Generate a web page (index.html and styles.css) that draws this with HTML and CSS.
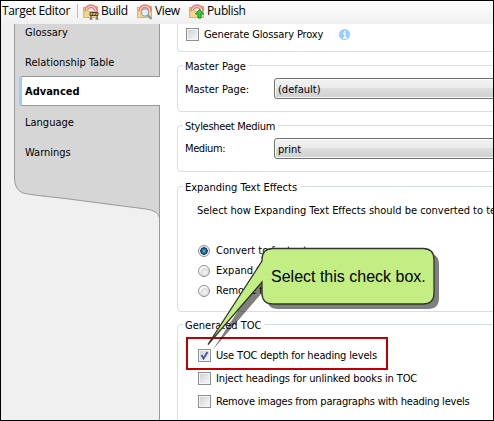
FILE: index.html
```html
<!DOCTYPE html>
<html lang="en">
<head>
<meta charset="utf-8">
<title>Target Editor</title>
<link rel="stylesheet" href="styles.css">
</head>
<body>
<svg class="defs" width="0" height="0" aria-hidden="true">
  <defs>
    <g id="folder">
      <path d="M.5 4.500h5l1-1h8v11H.5z" fill="#f6d783" stroke="#d5ad58"/>
      <path d="M2 8a6 6 0 0 1 12 0" fill="#fde3e0" stroke="#ef7775" stroke-width="1.500"/>
      <path d="M4.500 8a3.500 3.500 0 0 1 7 0" fill="#fff1ed" stroke="#ef7775" stroke-width="1.300"/>
      <path d="M.5 14.500v-6l4-1 2 1h8v6z" fill="#f3d58a" stroke="#ddb765"/>
    </g>
  </defs>
</svg>
<div class="window">
  <header class="toolbar">
    <span class="title">Target Editor</span>
    <span class="divider"></span>
    <span class="tool build"><svg width="16" height="17" viewBox="0 0 16 17"><use href="#folder"/><path d="M7 9.500h8v3H7z" fill="#edb52d" stroke="#454238"/><path d="m9 12 2-3m1 3 2-3M8 13v3m6-3v3M6.500 16h3m3 0h3" fill="none" stroke="#4e4e4e"/></svg><span>Build</span></span>
    <span class="tool view"><svg width="16" height="17" viewBox="0 0 16 17"><use href="#folder"/><circle cx="8" cy="9.500" r="3.600" fill="#e2edf5" stroke="#9aabb8" stroke-width="1.300"/><path d="m10.500 12 4 4" stroke="#8795a0" stroke-width="2"/></svg><span>View</span></span>
    <span class="tool publish"><svg width="16" height="17" viewBox="0 0 16 17"><use href="#folder"/><path d="m10.500 6.500 4 4.500h-2.500v4h-3v-4H6.500z" fill="#2bd044" stroke="#128c27"/></svg><span>Publish</span></span>
  </header>
  <div class="body">
    <nav class="sidebar">
      <svg class="backdrop" width="159" height="397" viewBox="0 0 159 397"><path d="M13.500 -2V155Q14 166 22 169Q30 171 60 174L145 185Q158 187 158.500 194V-2Z" fill="#d6d6d6"/><path d="M13.500 -2V155Q14 166 22 169Q30 171 60 174L145 185Q158 187 158.500 194M158.500 -2V397" fill="none" stroke="#999"/></svg>
      <div class="tab"><span>Glossary</span></div>
      <div class="tab"><span>Relationship Table</span></div>
      <div class="tab active"><span>Advanced</span></div>
      <div class="tab"><span>Language</span></div>
      <div class="tab"><span>Warnings</span></div>
    </nav>
    <main class="content">
      <section class="group proxy">
        <div class="row"><i class="check"></i><span class="t-proxy">Generate Glossary Proxy</span><svg class="info" width="11" height="11" viewBox="0 0 11 11"><circle cx="5.500" cy="5.500" r="5.500" fill="#99ccff"/><path d="M4 4.500h2V9M4 9h4M5 2.500h1.500" fill="none" stroke="#fff" stroke-width="1.300"/></svg></div>
      </section>
      <section class="group master">
        <h2>Master Page</h2>
        <div class="field"><label>Master Page:</label><div class="combo"><span>(default)</span></div></div>
      </section>
      <section class="group medium">
        <h2><span class="t-style">Stylesheet Medium</span></h2>
        <div class="field"><label><span class="t-medium">Medium:</span></label><div class="combo"><span>print</span></div></div>
      </section>
      <section class="group expanding">
        <h2>Expanding Text Effects</h2>
        <p>Select how Expanding Text Effects should be converted to text</p>
        <div class="row"><i class="radio on"></i><span>Convert to footnote</span></div>
        <div class="row"><i class="radio"></i><span>Expand text</span></div>
        <div class="row"><i class="radio"></i><span>Remove text</span></div>
      </section>
      <section class="group toc">
        <h2>Generated TOC</h2>
        <div class="row"><i class="check"><svg width="9" height="9" viewBox="0 0 9 9"><path d="m1.500 4 2 3.500L7.500 1" fill="none" stroke="#4358a5" stroke-width="1.900"/></svg></i><span class="t-use">Use TOC depth for heading levels</span></div>
        <div class="row"><i class="check"></i><span class="t-inject">Inject headings for unlinked books in TOC</span></div>
        <div class="row"><i class="check"></i><span class="t-images">Remove images from paragraphs with heading levels</span></div>
      </section>
    </main>
  </div>
  <div class="highlight"></div>
  <div class="callout">
    <svg width="240" height="110" viewBox="200 240 240 110">
      <path transform="translate(5 5)" d="M273 248.500H423Q434 248.500 434 259.500V293Q434 304 423 304H273Q262 304 262 293V282L208 344.500L262 261V259.500Q262 248.500 273 248.500Z" fill="#000" fill-opacity=".5"/>
      <path d="M273 248.500H423Q434 248.500 434 259.500V293Q434 304 423 304H273Q262 304 262 293V282L208 344.500L262 261V259.500Q262 248.500 273 248.500Z" fill="#c2ee84" stroke="#30372a" stroke-width="1.300"/>
    </svg>
    <span>Select this check box.</span>
  </div>
</div>
</body>
</html>
```
FILE: styles.css
```css
* { box-sizing: border-box; }
body { margin: 0; }
.defs { position: absolute; }
.window {
  position: relative;
  width: 494px;
  height: 421px;
  overflow: hidden;
  border: 1px solid #000;
  background: #f0f0f0;
  color: #000;
  font: 11px/14px "DejaVu Sans Condensed", "DejaVu Sans", sans-serif;
  font-stretch: condensed;
  white-space: nowrap;
}
.toolbar {
  display: flex;
  align-items: center;
  height: 23px;
  padding: 0 0 3px 1px;
  background: linear-gradient(#fdfdfd, #f0f0f0);
  font: 12px/18px "Open Sans", "Noto Sans", sans-serif;
}
.title { width: 75px; letter-spacing: -.33px; }
.divider { width: 1px; height: 14px; margin-right: 5px; background: #bbb; }
.tool { display: flex; align-items: center; gap: 2px; letter-spacing: -.35px; }
.tool svg { flex: none; }
.build { width: 54px; }
.view { width: 52px; }
.body { display: flex; height: 397px; }
.sidebar { position: relative; flex: none; width: 159px; padding-top: 1px; }
.backdrop { position: absolute; left: 0; top: 0; }
.tab { position: relative; display: flex; align-items: center; height: 30px; padding: 3px 0 0 24px; }
.tab:nth-of-type(1) { height: 21px; padding: 0 0 5px 24px; }
.tab.active {
  margin-left: 18px;
  padding: 2px 0 0 3px;
  border: solid #999;
  border-width: 1px 0;
  border-left: 3px solid #99ccff;
  border-radius: 3px 0 0 3px;
  background: #fff;
  font-weight: bold;
}
.content { flex: 1; min-width: 0; padding-left: 17px; background: #fff; overflow: hidden; }
.group { width: 340px; border: 1px solid #d5dfe5; border-radius: 4px; }
.group h2 {
  width: fit-content;
  height: 14px;
  margin: -7px 0 0 5px;
  padding: 1px 3px 0 2px;
  background: #fff;
  font: inherit;
}
.row { display: flex; align-items: center; height: 20px; gap: 5px; }
.proxy { height: 28px; border-top: 0; border-radius: 0 0 4px 4px; padding: 0 8px; }
.proxy .row { height: 21px; }
.info { margin-left: 8px; }
.master { height: 47px; margin-top: 13px; }
.medium { height: 47px; margin-top: 13px; }
.expanding { height: 126px; margin-top: 14px; }
.toc { height: 120px; margin-top: 12px; }
.field { display: flex; align-items: center; margin: 5px 0 0 7px; height: 21px; }
.field label { width: 89px; }
.master label { padding-top: 2px; }
.combo {
  display: flex;
  align-items: center;
  width: 240px;
  height: 21px;
  padding: 2px 0 0 3px;
  border: 1px solid #707070;
  border-radius: 3px;
  background: linear-gradient(#f2f2f2, #ebebeb 49%, #dddddd 50%, #cfcfcf);
  box-shadow: inset 0 0 0 1px #fafafa;
}
.expanding p { margin: 10px 0 23px 19px; letter-spacing: -.02px; }
.expanding .row, .toc .row { padding-left: 20px; }
.toc .row { height: 23px; }
.toc h2 { margin-bottom: 12px; }
.t-proxy { width: 122px; letter-spacing: -.13px; }
.t-style { letter-spacing: -.29px; }
.t-medium { letter-spacing: -.4px; }
.t-use { letter-spacing: -.16px; }
.t-inject { letter-spacing: -.12px; }
.t-images { letter-spacing: -.22px; }
.check {
  flex: none;
  width: 13px;
  height: 13px;
  padding: 1px;
  border: 1px solid #8e8f8f;
  background: linear-gradient(135deg, #cfd3d8, #f6f6f6) content-box;
  outline: 1px solid #f4f4f4;
  outline-offset: -2px;
}
.check svg { display: block; }
.radio {
  flex: none;
  width: 12px;
  height: 12px;
  border: 1px solid #8e8f8f;
  border-radius: 50%;
  background: radial-gradient(circle at 60% 65%, #f6f6f6 0, #dadada 50%, #fafafa 55%);
}
.radio + span { margin-left: 1px; }
.radio.on { background: radial-gradient(circle, #54c8ed 0, #1d5785 2.500px, #123c62 3.500px, #f4f4f4 4px); }
.highlight { position: absolute; left: 185px; top: 336px; width: 202px; height: 33px; border: 2px solid #c00000; }
.callout { position: absolute; left: 199px; top: 239px; width: 240px; height: 110px; }
.callout span { position: absolute; left: 71px; top: 28px; font: 16px/18px "Liberation Sans", Arial, sans-serif; }
```
